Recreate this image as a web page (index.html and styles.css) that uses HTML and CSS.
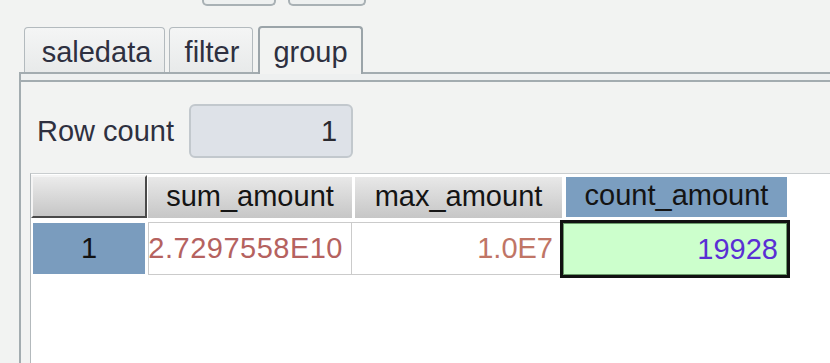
FILE: index.html
```html
<!DOCTYPE html>
<html>
<head>
<meta charset="utf-8">
<link rel="stylesheet" href="styles.css">
</head>
<body>
<div class="topbar">
  <span class="stub stub-a"></span>
  <span class="stub stub-b"></span>
</div>
<div class="tabs">
  <div class="tab t-sale">saledata</div>
  <div class="tab t-filter">filter</div>
  <div class="tab tab-active t-group">group</div>
</div>
<div class="panel">
  <div class="band"></div>
  <div class="content">
    <div class="rowcount">
      <span class="label">Row count</span>
      <div class="field">1</div>
    </div>
    <div class="scroll">
      <div class="thead">
        <div class="corner"></div>
        <div class="th c-sum">sum_amount</div>
        <div class="th c-max">max_amount</div>
        <div class="th th-sel c-count">count_amount</div>
      </div>
      <div class="trow">
        <div class="rowhead">1</div>
        <div class="td td-sum c-sum">2.7297558E10</div>
        <div class="td td-max c-max2">1.0E7</div>
        <div class="td td-focus">19928</div>
      </div>
    </div>
  </div>
</div>
</body>
</html>
```

FILE: styles.css
```css
* { box-sizing: border-box; }
html, body {
  margin: 0;
  padding: 0;
  width: 830px;
  height: 363px;
  overflow: hidden;
  background: #f2f3f2;
  font-family: "Liberation Sans", Arial, sans-serif;
  font-size: 29px;
  color: #2e3040;
}

.topbar {
  display: flex;
  gap: 12px;
  padding-left: 202px;
  height: 7px;
}
.stub {
  display: block;
  height: 6px;
  border: 2px solid #a9b1b5;
  border-top: 0;
  border-radius: 0 0 5px 5px;
  background: #eef0f0;
}
.stub-a { width: 74px; }
.stub-b { width: 78px; }

.tabs {
  display: flex;
  align-items: flex-end;
  margin-top: 19px;
  height: 46px;
  padding-left: 24px;
}
.tab {
  height: 45px;
  border: 1px solid #b3babe;
  border-bottom: 0;
  border-radius: 4px 4px 0 0;
  background: linear-gradient(#f4f5f5, #e8eaea);
  text-align: center;
  line-height: 29px;
  padding-top: 10px;
  color: #2e3040;
}
.t-sale { width: 141px; padding-left: 4px; }
.t-filter { width: 84px; margin-left: 4px; padding-left: 2px; }
.t-group { width: 105px; margin-left: 5px; }
.tab-active {
  position: relative;
  z-index: 1;
  height: 48px;
  margin-bottom: -2px;
  border: 2px solid #9ba4a9;
  border-bottom: 0;
  background: #f2f3f2;
  padding-top: 10px;
}

.panel {
  margin-left: 19px;
  border-top: 2px solid #a3acb0;
  border-left: 2px solid #a3acb0;
  height: 291px;
  display: flex;
  flex-direction: column;
}
.band {
  height: 8px;
  border-bottom: 2px solid #a3acb0;
  background: #eef0f0;
}
.content {
  flex: 1;
  display: flex;
  flex-direction: column;
}

.rowcount {
  display: flex;
  align-items: center;
  gap: 15px;
  margin-top: 22px;
  padding-left: 16px;
}
.label {
  line-height: 29px;
  color: #2e3040;
}
.field {
  width: 164px;
  height: 54px;
  border: 2px solid #c2c8cd;
  border-radius: 6px;
  background: #dee2e8;
  display: flex;
  align-items: center;
  justify-content: flex-end;
  padding-right: 14px;
  color: #2a2a30;
}

.scroll {
  flex: 1;
  margin-top: 15px;
  margin-left: 9px;
  border-top: 1px solid #c9cdcf;
  border-left: 1px solid #b3b9bc;
  background: #ffffff;
}

.thead {
  display: flex;
  align-items: flex-start;
  height: 44px;
}
.corner {
  width: 116px;
  height: 43px;
  margin-top: 1px;
  border-top: 2px solid #f4f4f4;
  border-left: 2px solid #f4f4f4;
  border-right: 2px solid #4a4a4a;
  border-bottom: 2px solid #4a4a4a;
  background: linear-gradient(#ebebeb, #c6c6c6);
}
.th {
  height: 41px;
  margin-top: 3px;
  display: flex;
  align-items: center;
  justify-content: center;
  padding-bottom: 3px;
  background: linear-gradient(#e8e8e8, #c6c6c6);
  color: #141414;
}
.c-sum { width: 204px; margin-left: 1px; }
.c-max { width: 207px; margin-left: 3px; }
.c-count { width: 221px; margin-left: 4px; height: 40px; }
.th-sel {
  background: #7b9ec0;
}

.trow {
  display: flex;
  align-items: flex-start;
}
.rowhead {
  width: 112px;
  height: 51px;
  margin-left: 2px;
  margin-top: 5px;
  background: #7a9cbe;
  display: flex;
  align-items: center;
  justify-content: center;
  color: #121212;
}
.td {
  height: 53px;
  margin-top: 4px;
  display: flex;
  align-items: center;
  justify-content: flex-end;
  padding-right: 8px;
  border: 1px solid #cbcbcb;
  background: #ffffff;
  white-space: nowrap;
}
.td-sum {
  margin-left: 3px;
  padding-right: 8px;
  letter-spacing: 0.5px;
  color: #b5625f;
}
.c-max2 {
  width: 210px;
  border-left: 0;
  color: #c07566;
}
.td-focus {
  width: 230px;
  height: 58px;
  margin-top: 2px;
  margin-left: -2px;
  border: 3px solid #111111;
  background: #ccffcc;
  box-shadow: inset 0 0 0 1px #6a9a6a;
  color: #5a2fd4;
  padding-right: 9px;
}
```
